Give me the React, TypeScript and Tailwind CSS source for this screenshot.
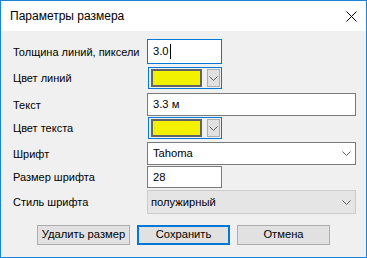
import React from 'react';

const font = { fontFamily: '"Liberation Sans", Arial, sans-serif' };

const Chevron: React.FC<{ className?: string }> = ({ className }) => (
  <svg width="9" height="5" viewBox="0 0 9 5" className={className}>
    <path d="M0.5 0.5 L4.5 4.5 L8.5 0.5" fill="none" stroke="#606060" strokeWidth="1" />
  </svg>
);

const ColorPicker: React.FC = () => (
  <div className="w-[74px] h-[22px] border border-[#0078d7] flex items-center pl-[2px] pr-[1px] gap-[5px]">
    <div className="w-[52px] h-[18px] border-2 border-[#646464] bg-[#f2f200]" />
    <div className="w-[13px] h-[18px] border border-[#adadad] bg-[#e1e1e1] flex items-center justify-center">
      <Chevron />
    </div>
  </div>
);

const Row: React.FC<{ label: string; mt: string; children: React.ReactNode }> = ({ label, mt, children }) => (
  <div className={`flex items-center ${mt}`}>
    <div className="w-[134px] shrink-0 whitespace-nowrap text-[11px] leading-none text-black pt-px">{label}</div>
    {children}
  </div>
);

export default function App() {
  return (
    <div className="w-[367px] h-[258px] border border-[#1883d7] bg-[#f0f0f0] flex flex-col overflow-hidden" style={font}>
      {/* title bar */}
      <div className="h-[30px] shrink-0 bg-white flex items-center justify-between pl-[9px] pr-[9px]">
        <span className="text-[12px] text-black">Параметры размера</span>
        <svg width="11" height="11" viewBox="0 0 11 11">
          <path d="M0.5 0.5 L10.5 10.5 M10.5 0.5 L0.5 10.5" stroke="#000" strokeWidth="1" />
        </svg>
      </div>

      <div className="flex flex-col pl-[12px] text-[11.2px]">
        <Row label="Толщина линий, пиксели" mt="mt-[8px]">
          <div className="w-[75px] h-[25px] border border-[#0078d7] bg-white flex items-center pl-[5px]">
            3.0<span className="w-px h-[15px] bg-black ml-px" />
          </div>
        </Row>
        <Row label="Цвет линий" mt="mt-[3px]">
          <div className="pl-px"><ColorPicker /></div>
        </Row>
        <Row label="Текст" mt="mt-[4px]">
          <div className="w-[209px] h-[23px] border border-[#7a7a7a] bg-white flex items-center pl-[5px]">3.3 м</div>
        </Row>
        <Row label="Цвет текста" mt="mt-[1px]">
          <div className="pl-px"><ColorPicker /></div>
        </Row>
        <Row label="Шрифт" mt="mt-[3px]">
          <div className="w-[209px] h-[23px] border border-[#7a7a7a] bg-white flex items-center justify-between pl-[5px] pr-[4px]">
            Tahoma
            <Chevron />
          </div>
        </Row>
        <Row label="Размер шрифта" mt="mt-[1px]">
          <div className="w-[75px] h-[22px] border border-[#7a7a7a] bg-white flex items-center pl-[5px]">28</div>
        </Row>
        <Row label="Стиль шрифта" mt="mt-[2px]">
          <div className="w-[209px] h-[24px] border border-[#cccccc] bg-[#e5e5e5] flex items-center justify-between pl-[3px] pr-[4px]">
            полужирный
            <Chevron />
          </div>
        </Row>

        <div className="flex gap-[7px] mt-[11px] pl-[24px] leading-none">
          <button className="w-[93px] h-[20px] border border-[#adadad] bg-[#e1e1e1] flex items-center justify-center whitespace-nowrap">Удалить размер</button>
          <button className="w-[93px] h-[20px] border-2 border-[#0078d7] bg-[#e1e1e1] flex items-center justify-center whitespace-nowrap">Сохранить</button>
          <button className="w-[93px] h-[20px] border border-[#adadad] bg-[#e1e1e1] flex items-center justify-center whitespace-nowrap">Отмена</button>
        </div>
      </div>
    </div>
  );
}
